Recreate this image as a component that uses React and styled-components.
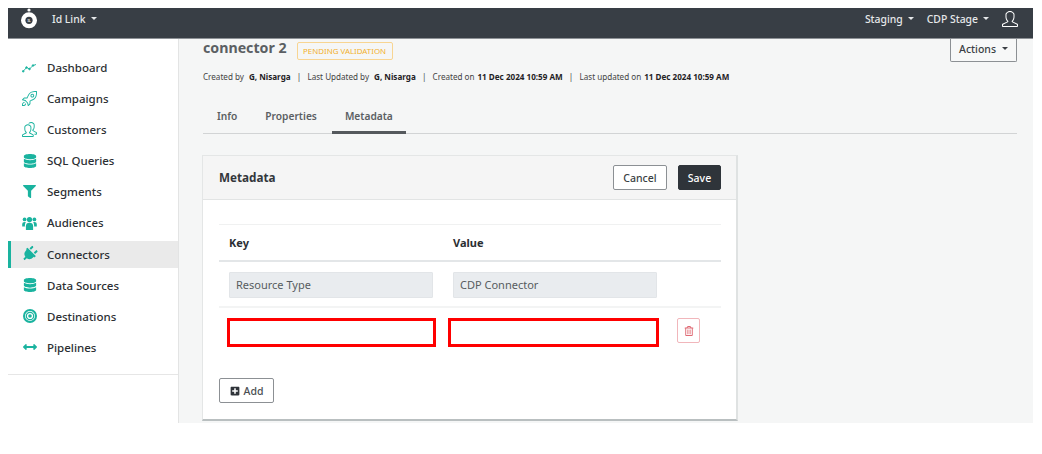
import React from "react";
import styled, { createGlobalStyle } from "styled-components";
import { FaDatabase, FaFilter, FaPlug, FaRegTrashAlt, FaPlusSquare, FaArrowsAltH } from "react-icons/fa";
import { SlRocket, SlPeople, SlUser } from "react-icons/sl";

const Global = createGlobalStyle`
  html, body { margin: 0; background: #fff; }
  body { padding: 8px 9px 0 8px; font-family: "Noto Sans", "Open Sans", sans-serif; color: #333; }
  * { box-sizing: border-box; }
`;

const Shell = styled.div`
  height: 415px;
  display: flex;
  flex-direction: column;
  overflow: hidden;
`;

const Topbar = styled.header`
  flex: 0 0 31px;
  background: #383e45;
  border-bottom: 1px solid #8d9196;
  display: flex;
  align-items: center;
  padding: 0 15px 9px 12px;
  color: #e6e8ea;
  font-size: 10.4px;
  font-weight: 500;
`;

const Logo = styled.svg`
  width: 18px;
  height: 21px;
  margin-right: 14px;
`;

const LogoText = styled.text`
  font-family: "Noto Sans", sans-serif;
  font-size: 3.4px;
  font-weight: 700;
  fill: #e6e8ea;
  text-anchor: middle;
`;

const TopMenu = styled.span`
  display: inline-flex;
  align-items: center;
  margin-left: ${(p) => p.$gap || 0}px;
  &::after {
    content: "";
    margin-left: 5px;
    border-top: 3px solid currentColor;
    border-left: 3px solid transparent;
    border-right: 3px solid transparent;
  }
`;

const Spacer = styled.div`
  flex: 1;
`;

const UserIcon = styled(SlUser)`
  font-size: 16px;
  margin-left: 13px;
  color: #fff;
`;

const Body = styled.div`
  flex: 1;
  display: flex;
  min-height: 0;
`;

const Sidebar = styled.nav`
  flex: 0 0 171px;
  background: #fff;
  border-right: 1px solid #e3e4e4;
  display: flex;
  flex-direction: column;
  padding-top: 15px;
`;

const NavList = styled.div`
  padding-bottom: 9.4px;
  border-bottom: 1px solid #e6e6e6;
`;

const NavItem = styled.div`
  height: 27px;
  margin-bottom: 4.1px;
  display: flex;
  align-items: center;
  padding-left: ${(p) => (p.$active ? 11 : 14)}px;
  border-left: ${(p) => (p.$active ? "3px solid #1ab39f" : "0")};
  background: ${(p) => (p.$active ? "#eaeaea" : "transparent")};
  font-size: 11.5px;
  font-weight: 500;
  color: #2c2f33;
`;

const NavIcon = styled.span`
  width: 15px;
  height: 16px;
  margin-right: 10px;
  display: flex;
  align-items: center;
  justify-content: center;
  color: #1ab39f;
  font-size: ${(p) => p.$size ?? 14}px;
  transform: rotate(${(p) => p.$rotate ?? 0}deg);
  flex: none;
`;

const Main = styled.main`
  flex: 1;
  background: #f5f6f6;
  padding: 0 16px 0 24px;
  min-width: 0;
  overflow: hidden;
`;

const TitleRow = styled.div`
  display: flex;
  align-items: flex-start;
  height: 24px;
`;

const Title = styled.h1`
  margin: 0;
  font-size: 14.2px;
  line-height: 18px;
  font-weight: 700;
  color: #5b5f63;
`;

const Badge = styled.span`
  margin-left: 10px;
  margin-top: 3px;
  height: 18px;
  width: 96px;
  border: 1px solid #f8d592;
  border-radius: 2px;
  color: #f2b02e;
  font-size: 7.9px;
  display: flex;
  align-items: center;
  justify-content: center;
  white-space: nowrap;
`;

const ActionsButton = styled.button`
  margin-left: auto;
  width: 67px;
  height: 23px;
  border: 1px solid #8c9094;
  border-top: 0;
  border-radius: 0 0 2px 2px;
  background: #f7f8f8;
  color: #3a3f44;
  font: 500 10.5px "Noto Sans", sans-serif;
  display: flex;
  align-items: center;
  justify-content: center;
  padding: 0 0 3px;
  &::after {
    content: "";
    margin-left: 6px;
    border-top: 3px solid currentColor;
    border-left: 3px solid transparent;
    border-right: 3px solid transparent;
  }
`;

const Meta = styled.div`
  margin-top: 7px;
  font-size: 8.1px;
  line-height: 13px;
  color: #444;
  white-space: nowrap;
  display: flex;
`;

const MetaBold = styled.b`
  font-weight: 700;
  color: #1f2225;
  margin-left: ${(p) => p.$left ?? 3}px;
`;

const MetaSep = styled.span`
  margin: 0 6.2px;
`;

const Tabs = styled.div`
  margin-top: 17px;
  display: flex;
  height: 34px;
  border-bottom: 1px solid #d2d4d5;
  padding-left: 1px;
`;

const Tab = styled.div`
  height: 34px;
  padding: 0 13px;
  margin-right: 2px;
  display: flex;
  align-items: center;
  font-size: 10.2px;
  font-weight: 600;
  color: #5b5f63;
  border-bottom: 3px solid ${(p) => (p.$active ? "#55595d" : "transparent")};
`;

const Card = styled.section`
  margin: 21px 0 0 -1px;
  width: 536px;
  height: 266px;
  background: #fff;
  border: 1px solid #e4e6e6;
  border-bottom: 2px solid #b9bfc0;
  border-right: 2px solid #dfe2e2;
  display: flex;
  flex-direction: column;
`;

const CardHead = styled.div`
  height: 44px;
  flex: none;
  background: #f5f5f5;
  border-bottom: 1px solid #e2e4e4;
  display: flex;
  align-items: center;
  padding: 0 15px 0 16px;
`;

const CardTitle = styled.h2`
  margin: -2px 0 0;
  font-size: 11.7px;
  font-weight: 700;
  color: #33373b;
`;

const Btn = styled.button`
  height: 25px;
  width: ${(p) => p.$w}px;
  margin-left: ${(p) => p.$ml ?? 0}px;
  border-radius: 2px;
  border: 1px solid ${(p) => (p.$dark ? "#2f343a" : "#8c9094")};
  background: ${(p) => (p.$dark ? "#2f343a" : "#fff")};
  color: ${(p) => (p.$dark ? "#fff" : "#3a3f44")};
  font: 500 10.5px "Noto Sans", sans-serif;
  display: inline-flex;
  align-items: center;
  justify-content: center;
  padding: 0;
`;

const CardBody = styled.div`
  padding: 24px 15px 0 16px;
  flex: 1;
`;

const KVHead = styled.div`
  border-top: 1px solid #f0f1f1;
  border-bottom: 2px solid #e3e6e8;
  height: 38px;
  display: grid;
  grid-template-columns: 224px 1fr;
  align-items: center;
  padding-left: 10px;
  font-size: 11px;
  font-weight: 700;
  color: #2c2f33;
`;

const KVRow = styled.div`
  display: grid;
  grid-template-columns: ${(p) => p.$cols};
  align-items: start;
  padding: ${(p) => p.$pad};
  height: ${(p) => p.$h}px;
  border-bottom: ${(p) => (p.$line ? "2px solid #f3f4f4" : "0")};
`;

const ReadOnly = styled.div`
  height: 26px;
  background: #e9ecef;
  border: 1px solid #e2e5e8;
  border-radius: 1px;
  display: flex;
  align-items: center;
  padding: 0 0 2px 6px;
  font-size: 11px;
  color: #575c60;
  width: ${(p) => p.$w}px;
`;

const ErrorInput = styled.div`
  height: 29px;
  width: ${(p) => p.$w}px;
  border: 3px solid #ff0000;
  background: #fff;
`;

const TrashButton = styled.button`
  width: 23px;
  height: 25px;
  background: #fff;
  border: 1px solid #f1b6bb;
  border-radius: 2px;
  color: #df6a74;
  font-size: 10px;
  display: flex;
  align-items: center;
  justify-content: center;
  padding: 0;
  margin-left: 18px;
`;

const AddButton = styled(Btn)`
  margin-top: 32px;
  gap: 4px;
  color: #4a4e52;
  svg { color: #2f343a; font-size: 10px; }
`;

const ChartIcon = () => (
  <svg width="15" height="10" viewBox="0 0 15 10" fill="none" stroke="currentColor" strokeWidth="0.9">
    <polyline points="1,8.5 4.5,4.5 7.5,6 11,2.5 14,1.5" />
    <circle cx="1.2" cy="8.3" r="0.8" fill="currentColor" />
    <circle cx="4.5" cy="4.5" r="0.8" fill="currentColor" />
    <circle cx="7.5" cy="6" r="0.8" fill="currentColor" />
    <circle cx="11" cy="2.5" r="0.8" fill="currentColor" />
  </svg>
);

const TargetIcon = () => (
  <svg width="14" height="14" viewBox="0 0 14 14" fill="none" stroke="currentColor">
    <circle cx="7" cy="7" r="6" strokeWidth="2" />
    <circle cx="7" cy="7" r="3.7" strokeWidth="1.2" />
    <circle cx="7" cy="7" r="1.8" fill="currentColor" stroke="none" />
  </svg>
);

const GroupIcon = () => (
  <svg width="15" height="14" viewBox="0 0 15 14" fill="currentColor">
    <circle cx="7.5" cy="3.6" r="2.6" />
    <circle cx="2.6" cy="3.4" r="1.9" />
    <circle cx="12.4" cy="3.4" r="1.9" />
    <path d="M3.9 14V10.2Q3.9 6.8 7.5 6.8Q11.1 6.8 11.1 10.2V14Z" />
    <path d="M.2 10.4V8Q.2 5.9 2.6 5.9H3.8Q2.9 7.5 2.9 9.6V10.4Z" />
    <path d="M14.8 10.4V8Q14.8 5.9 12.4 5.9H11.2Q12.1 7.5 12.1 9.6V10.4Z" />
  </svg>
);

const nav = [
  { label: "Dashboard", icon: <ChartIcon /> },
  { label: "Campaigns", icon: <SlRocket />, size: 15 },
  { label: "Customers", icon: <SlPeople />, size: 15 },
  { label: "SQL Queries", icon: <FaDatabase /> },
  { label: "Segments", icon: <FaFilter />, size: 13 },
  { label: "Audiences", icon: <GroupIcon /> },
  { label: "Connectors", icon: <FaPlug />, size: 16, rotate: 45, active: true },
  { label: "Data Sources", icon: <FaDatabase /> },
  { label: "Destinations", icon: <TargetIcon /> },
  { label: "Pipelines", icon: <FaArrowsAltH /> },
];

export default function App() {
  return (
    <>
      <Global />
      <Shell>
        <Topbar>
          <Logo viewBox="0 0 18 21">
            <circle cx="9" cy="12.3" r="8" fill="#fff" />
            <circle cx="9" cy="12.3" r="3.6" fill="#383e45" />
            <circle cx="9" cy="2" r="1.6" fill="#fff" />
            <LogoText x="9" y="13.5">IL</LogoText>
          </Logo>
          <TopMenu>Id Link</TopMenu>
          <Spacer />
          <TopMenu>Staging</TopMenu>
          <TopMenu $gap={13}>CDP Stage</TopMenu>
          <UserIcon />
        </Topbar>
        <Body>
          <Sidebar>
            <NavList>
              {nav.map((n) => (
                <NavItem key={n.label} $active={n.active}>
                  <NavIcon $size={n.size} $rotate={n.rotate}>{n.icon}</NavIcon>
                  {n.label}
                </NavItem>
              ))}
            </NavList>
          </Sidebar>
          <Main>
            <TitleRow>
              <Title>connector 2</Title>
              <Badge>PENDING VALIDATION</Badge>
              <ActionsButton>Actions</ActionsButton>
            </TitleRow>
            <Meta>
              Created by<MetaBold $left={5}>G, Nisarga</MetaBold>
              <MetaSep>|</MetaSep>Last Updated by<MetaBold $left={5}>G, Nisarga</MetaBold>
              <MetaSep>|</MetaSep>Created on<MetaBold>11 Dec 2024 10:59 AM</MetaBold>
              <MetaSep>|</MetaSep>Last updated on<MetaBold>11 Dec 2024 10:59 AM</MetaBold>
            </Meta>
            <Tabs>
              <Tab>Info</Tab>
              <Tab>Properties</Tab>
              <Tab $active>Metadata</Tab>
            </Tabs>
            <Card>
              <CardHead>
                <CardTitle>Metadata</CardTitle>
                <Spacer />
                <Btn $w={54}>Cancel</Btn>
                <Btn $w={43} $ml={11} $dark>Save</Btn>
              </CardHead>
              <CardBody>
                <KVHead>
                  <span>Key</span>
                  <span>Value</span>
                </KVHead>
                <KVRow $cols="224px 1fr" $pad="10px 0 0 10px" $h={46} $line>
                  <ReadOnly $w={204}>Resource Type</ReadOnly>
                  <ReadOnly $w={204}>CDP Connector</ReadOnly>
                </KVRow>
                <KVRow $cols="221px 211px auto" $pad="10px 0 0 8px" $h={38}>
                  <ErrorInput $w={209} />
                  <ErrorInput $w={211} />
                  <TrashButton><FaRegTrashAlt /></TrashButton>
                </KVRow>
                <AddButton $w={55}><FaPlusSquare />Add</AddButton>
              </CardBody>
            </Card>
          </Main>
        </Body>
      </Shell>
    </>
  );
}
